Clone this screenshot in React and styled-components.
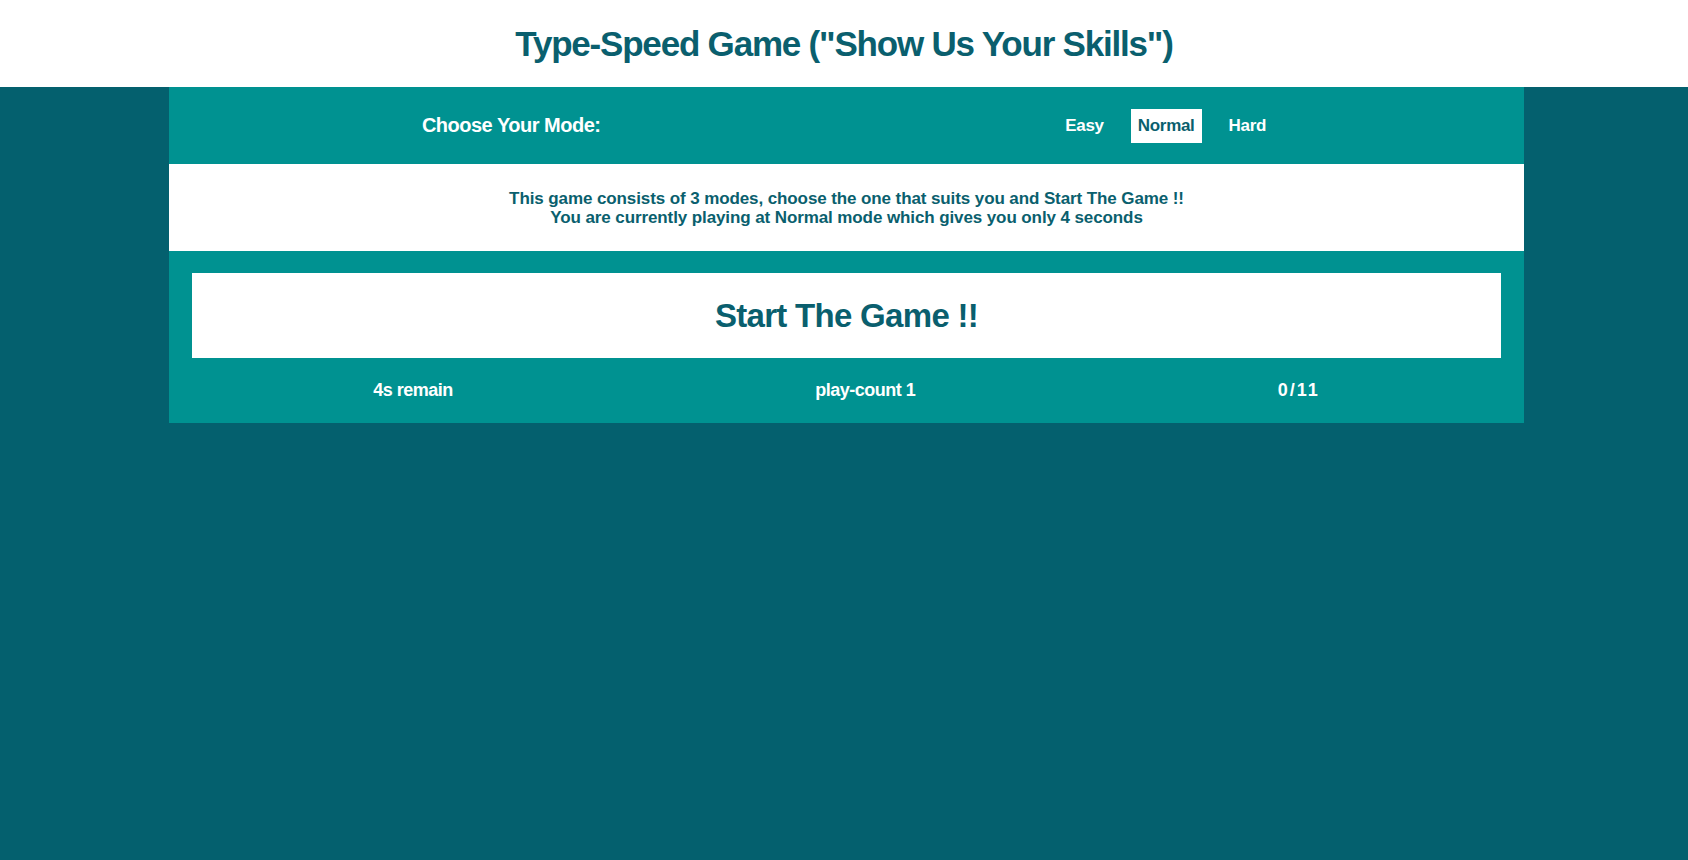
import React from "react";
import styled, { createGlobalStyle } from "styled-components";

const Global = createGlobalStyle`
  html, body { margin: 0; padding: 0; }
  body {
    background: #04606e;
    font-family: "Liberation Sans Narrow", "Liberation Sans", Arial, sans-serif;
    font-weight: bold;
    min-height: 860px;
  }
`;

const Header = styled.header`
  background: #ffffff;
  height: 87px;
  display: flex;
  align-items: center;
  justify-content: center;
`;

const Title = styled.h1`
  margin: 0;
  color: #0a5f6e;
  font-size: 35px;
  letter-spacing: -1.2px;
  font-weight: bold;
`;

const Panel = styled.main`
  width: 1355px;
  margin-left: 169px;
  background: #009291;
`;

const ModeBar = styled.section`
  height: 77px;
  padding: 0 17px 0 29px;
  display: flex;
  align-items: center;
  justify-content: space-around;
  color: #ffffff;
`;

const Label = styled.span`
  font-size: 20px;
  letter-spacing: -0.5px;
`;

const Modes = styled.div`
  display: flex;
  align-items: center;
`;

const ModeButton = styled.span`
  margin: 0 10px;
  padding: 7px 7px;
  font-size: 17px;
  letter-spacing: -0.3px;
  color: ${(p) => (p.$active ? "#0a5f6e" : "#ffffff")};
  background: ${(p) => (p.$active ? "#ffffff" : "transparent")};
`;

const Info = styled.section`
  background: #ffffff;
  height: 87px;
  display: flex;
  flex-direction: column;
  align-items: center;
  justify-content: center;
  color: #0a5f6e;
  font-size: 17px;
  letter-spacing: -0.1px;
  line-height: 19px;
`;

const Game = styled.section`
  padding: 22px 23px 0;
`;

const StartBox = styled.div`
  background: #ffffff;
  height: 85px;
  display: flex;
  align-items: center;
  justify-content: center;
  color: #0a5f6e;
  font-size: 33px;
  letter-spacing: -0.7px;
`;

const Stats = styled.div`
  height: 65px;
  display: flex;
  align-items: center;
  justify-content: space-around;
  color: #ffffff;
  font-size: 18px;
`;

const Stat = styled.span`
  letter-spacing: ${(p) => p.$spacing || "-0.5px"};
`;

export default function App() {
  return (
    <>
      <Global />
      <Header>
        <Title>Type-Speed Game ("Show Us Your Skills")</Title>
      </Header>
      <Panel>
        <ModeBar>
          <Label>Choose Your Mode:</Label>
          <Modes>
            <ModeButton>Easy</ModeButton>
            <ModeButton $active>Normal</ModeButton>
            <ModeButton>Hard</ModeButton>
          </Modes>
        </ModeBar>
        <Info>
          <div>This game consists of 3 modes, choose the one that suits you and Start The Game !!</div>
          <div>You are currently playing at Normal mode which gives you only 4 seconds</div>
        </Info>
        <Game>
          <StartBox>Start The Game !!</StartBox>
          <Stats>
            <Stat>4s remain</Stat>
            <Stat>play-count 1</Stat>
            <Stat $spacing="2px">0/11</Stat>
          </Stats>
        </Game>
      </Panel>
    </>
  );
}
